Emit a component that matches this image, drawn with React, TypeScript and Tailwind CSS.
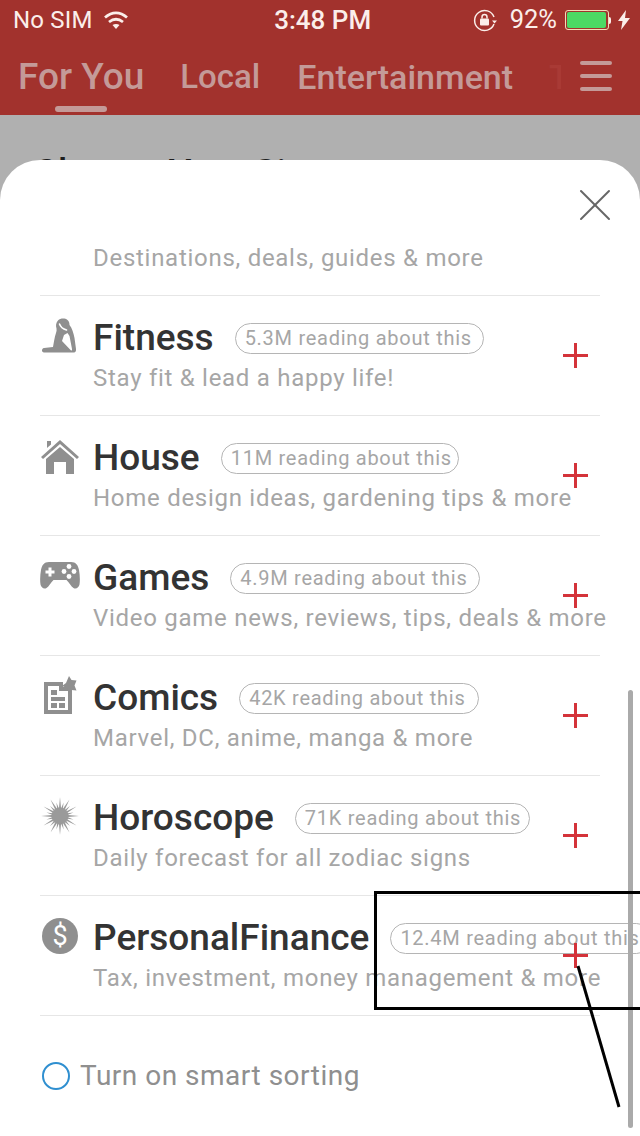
import { X } from "lucide-react";
import type { ReactNode } from "react";

function FitnessIcon() {
  return (
    <svg width="40" height="40" viewBox="0 0 40 40" fill="#8f8f8f">
      <path d="M4 36.500c-2.500 0-2.800-4 0-4.500l9-1c1-5 1.500-10 3-14 .6-1.500.8-3 .5-4.500-1-3-.5-6 1.500-8 2.500-2.500 7-2.500 9.500-.5 1.500 1.200 2 3 2 5 2.500 3 4 8 5 13l1.500 11c.2 2-.5 3.500-2 3.500z" />
      <path d="M19.500 8c1 3 3.500 5 7 6" fill="none" stroke="#fff" strokeWidth="1.600" strokeLinecap="round" />
      <path d="M24 19l-2 6 9 9.500c.8 0 1.200-.5 1-1.500l-2.500-13-2-3z" fill="#fff" />
    </svg>
  );
}

function HouseIcon() {
  return (
    <svg width="40" height="40" viewBox="0 0 40 40" fill="#8f8f8f">
      <path d="M1 21L20 4l19 17-2 2L20 8 3 23z" />
      <path d="M7 12V5h4v3.500z" />
      <path fillRule="evenodd" d="M6 23L20 11l14 12v15H26V26H14v12H6z" />
    </svg>
  );
}

function GamesIcon() {
  return (
    <svg width="40" height="40" viewBox="0 0 40 40">
      <path
        fill="#8f8f8f"
        d="M9 6h22c5 0 7 3 8 8 .8 4.500 1.200 10 .5 14.500-.5 3-3.500 5-6 3.500-2.500-1.500-4.500-6-7-8H13.500c-2.500 2-4.500 6.500-7 8C4 33.500 1 31.500.5 28.500-.2 24 .2 18.500 1 14c1-5 3-8 8-8z"
      />
      <path d="M10 11.500v9M5.500 16h9" stroke="#fff" strokeWidth="3" />
      <g fill="#fff">
        <circle cx="29" cy="10.500" r="2.400" />
        <circle cx="29" cy="20.500" r="2.400" />
        <circle cx="24" cy="15.500" r="2.400" />
        <circle cx="34" cy="15.500" r="2.400" />
      </g>
    </svg>
  );
}

function ComicsIcon() {
  return (
    <svg width="40" height="40" viewBox="0 0 40 40" fill="#8f8f8f">
      <path fillRule="evenodd" d="M4 6h19v5h9v27H4zM8 10v24h20V15h-9v-5z" />
      <path d="M11 14h6v5h-6zM11 21h14v4H11zM11 27h6v5h-6zM19 27h6v5h-6z" />
      <path d="M29 0l2.500 4 5 .5-2 5 2 5-5-.5-3 3-1.500-5L22 10l4-3z" />
    </svg>
  );
}

function HoroscopeIcon() {
  const rays = Array.from({ length: 24 }, (_, i) => i * 15);
  return (
    <svg width="40" height="40" viewBox="0 0 40 40" fill="#9a9a9a">
      {rays.map((a, i) => (
        <path
          key={a}
          d={i % 2 === 0 ? "M19 12L20 1l1 11z" : "M19.200 12L20 6l.8 6z"}
          transform={`rotate(${a} 20 20)`}
        />
      ))}
      <circle cx="20" cy="20" r="8.500" />
    </svg>
  );
}

function FinanceIcon() {
  return (
    <div className="flex h-9 w-9 items-center justify-center rounded-full bg-[#8f8f8f] text-[27px] leading-none text-white">
      $
    </div>
  );
}

const rows: { icon: ReactNode; title: string; pill: string; sub: string; pillW: string }[] = [
  { icon: <FitnessIcon />, title: "Fitness", pill: "5.3M reading about this", sub: "Stay fit & lead a happy life!", pillW: "w-[249px]" },
  { icon: <HouseIcon />, title: "House", pill: "11M reading about this", sub: "Home design ideas, gardening tips & more", pillW: "w-[238px]" },
  { icon: <GamesIcon />, title: "Games", pill: "4.9M reading about this", sub: "Video game news, reviews, tips, deals & more", pillW: "w-[250px]" },
  { icon: <ComicsIcon />, title: "Comics", pill: "42K reading about this", sub: "Marvel, DC, anime, manga & more", pillW: "w-[240px]" },
  { icon: <HoroscopeIcon />, title: "Horoscope", pill: "71K reading about this", sub: "Daily forecast for all zodiac signs", pillW: "w-[235px]" },
  { icon: <FinanceIcon />, title: "PersonalFinance", pill: "12.4M reading about this", sub: "Tax, investment, money management & more", pillW: "w-[262px]" },
];

function StatusBar() {
  return (
    <div className="relative flex h-10 items-center justify-between pl-[13px] pr-[10px] text-[#fbeeea]">
      <div className="flex items-center gap-[10px]">
        <span className="text-[24px] leading-none tracking-[0.2px]">No SIM</span>
        <svg width="26" height="20" viewBox="0 0 26 20" fill="none" stroke="#fbeeea" strokeWidth="2.800">
          <path d="M2 7.500C9 1.500 17 1.500 24 7.500" />
          <path d="M6 12c4.500-3.500 9.500-3.500 14 0" />
          <path d="M13 19l-3.500-4c2-1.500 5-1.500 7 0z" fill="#fbeeea" stroke="none" />
        </svg>
      </div>
      <span className="ml-[44px] text-[26px] font-medium leading-none">3:48 PM</span>
      <div className="flex items-center justify-end">
        <svg width="24" height="24" viewBox="0 0 24 24" fill="none" stroke="#fbeeea" strokeWidth="1.500" className="mr-[13px]">
          <path d="M21 9A10 10 0 1 0 21 16" />
          <path d="M19 12.500h5l-2.500 3z" fill="#fbeeea" stroke="none" />
          <rect x="7" y="10.500" width="9" height="7" fill="#fbeeea" stroke="none" rx="1" />
          <path d="M9 10.500V9a2.500 2.500 0 0 1 5 0v1.500" />
        </svg>
        <span className="mr-[8px] text-[25.500px] leading-none">92%</span>
        <div className="flex h-[20px] w-[44px] rounded-[3px] border border-[#f3dcb8] p-[1px]">
          <div className="w-[97%] rounded-[2px] bg-[#4cd964]" />
        </div>
        <div className="mr-[7px] h-[7px] w-[2px] rounded-r-full bg-[#fbeeea]" />
        <svg width="12" height="20" viewBox="0 0 12 20" fill="#fbeeea">
          <path d="M8 0L0 11h4.500L3 20l9-12H7z" />
        </svg>
      </div>
    </div>
  );
}

function Tabs() {
  return (
    <div className="relative flex h-[75px] items-start overflow-hidden pl-[18px] pt-[15px] text-[34px] font-medium leading-[44px] text-[#c49a98]">
      <span className="mr-[36px] text-[37px]">For You</span>
      <span className="mr-[37px] text-[33px]">Local</span>
      <span className="mr-[36px]">Entertainment</span>
      <span className="w-[12px] overflow-hidden text-[#a93a35]">T</span>
      <div className="absolute bottom-[3px] left-[55px] h-[6px] w-[52px] rounded-full bg-[#c49a98]" />
      <div className="absolute left-[580px] top-[21px] flex h-[30px] w-[32px] flex-col justify-between">
        <div className="h-[4px] rounded-full bg-[#c49a98]" />
        <div className="h-[4px] rounded-full bg-[#c49a98]" />
        <div className="h-[4px] rounded-full bg-[#c49a98]" />
      </div>
    </div>
  );
}

export default function App() {
  return (
    <div className="relative flex h-[1136px] w-[640px] flex-col overflow-hidden bg-[#b0b0b0] font-['Roboto',sans-serif]">
      <div className="bg-[#a2322d]">
        <StatusBar />
        <Tabs />
      </div>
      <div className="h-[45px] overflow-hidden pl-[34px] pt-[36px] text-[37px] font-medium leading-[44px] text-[#1d1d1d]">
        Choose Your Sites
      </div>
      <div className="relative flex-1 rounded-t-[40px] bg-white px-[40px]">
        <div className="flex h-[136px] flex-col justify-end border-b border-[#e6e6e6] pb-[21px] pl-[53px] text-[24px] leading-[32px] tracking-[0.72px] text-[#a6a6a6]">
          Destinations, deals, guides &amp; more
        </div>
        {rows.map((row) => (
          <div key={row.title} className="relative h-[120px] border-b border-[#e6e6e6]">
            <div className="absolute left-0 top-[20px] flex h-[40px] w-[40px] items-center justify-center">{row.icon}</div>
            <div className="flex items-center pl-[53px] pt-[21px]">
              <span className="whitespace-nowrap text-[37px] font-medium leading-[42px] text-[#333333]">{row.title}</span>
              <span
                className={`${row.pillW} ml-[21px] flex h-[31px] shrink-0 items-center whitespace-nowrap rounded-full border border-[#b5b5b5] pl-[9px] text-[20px] tracking-[0.73px] text-[#a6a6a6]`}
              >
                {row.pill}
              </span>
            </div>
            <div className="whitespace-nowrap pl-[53px] pt-[1px] text-[24px] leading-[36px] tracking-[0.72px] text-[#a6a6a6]">
              {row.sub}
            </div>
            <div className="absolute left-[523px] top-[47px] h-[25px] w-[25px]">
              <div className="absolute left-[11px] top-0 h-full w-[3px] bg-[#d4333a]" />
              <div className="absolute left-0 top-[11px] h-[3px] w-full bg-[#d4333a]" />
            </div>
          </div>
        ))}
        <div className="flex items-center pt-[44px]">
          <div className="ml-[2px] h-[28px] w-[28px] rounded-full border-2 border-[#2f8fd0]" />
          <span className="ml-[10px] text-[28px] leading-[32px] tracking-[0.5px] text-[#8f8f8f]">Turn on smart sorting</span>
        </div>
        <div className="absolute right-[17px] top-[17px] text-[#666666]">
          <X size={56} strokeWidth={2} absoluteStrokeWidth />
        </div>
      </div>
      {/* scrollbar + hand-drawn annotation on top of the screenshot */}
      <div className="absolute left-[628px] top-[690px] h-[438px] w-[5px] rounded-full bg-[#aaaaaa]" />
      <div className="absolute left-[374px] top-[891px] h-[119px] w-[270px] border-[3px] border-black" />
      <svg className="absolute left-[570px] top-[960px]" width="60" height="150" viewBox="0 0 60 150">
        <path d="M8 6L49 147" stroke="#000" strokeWidth="3" />
      </svg>
    </div>
  );
}
